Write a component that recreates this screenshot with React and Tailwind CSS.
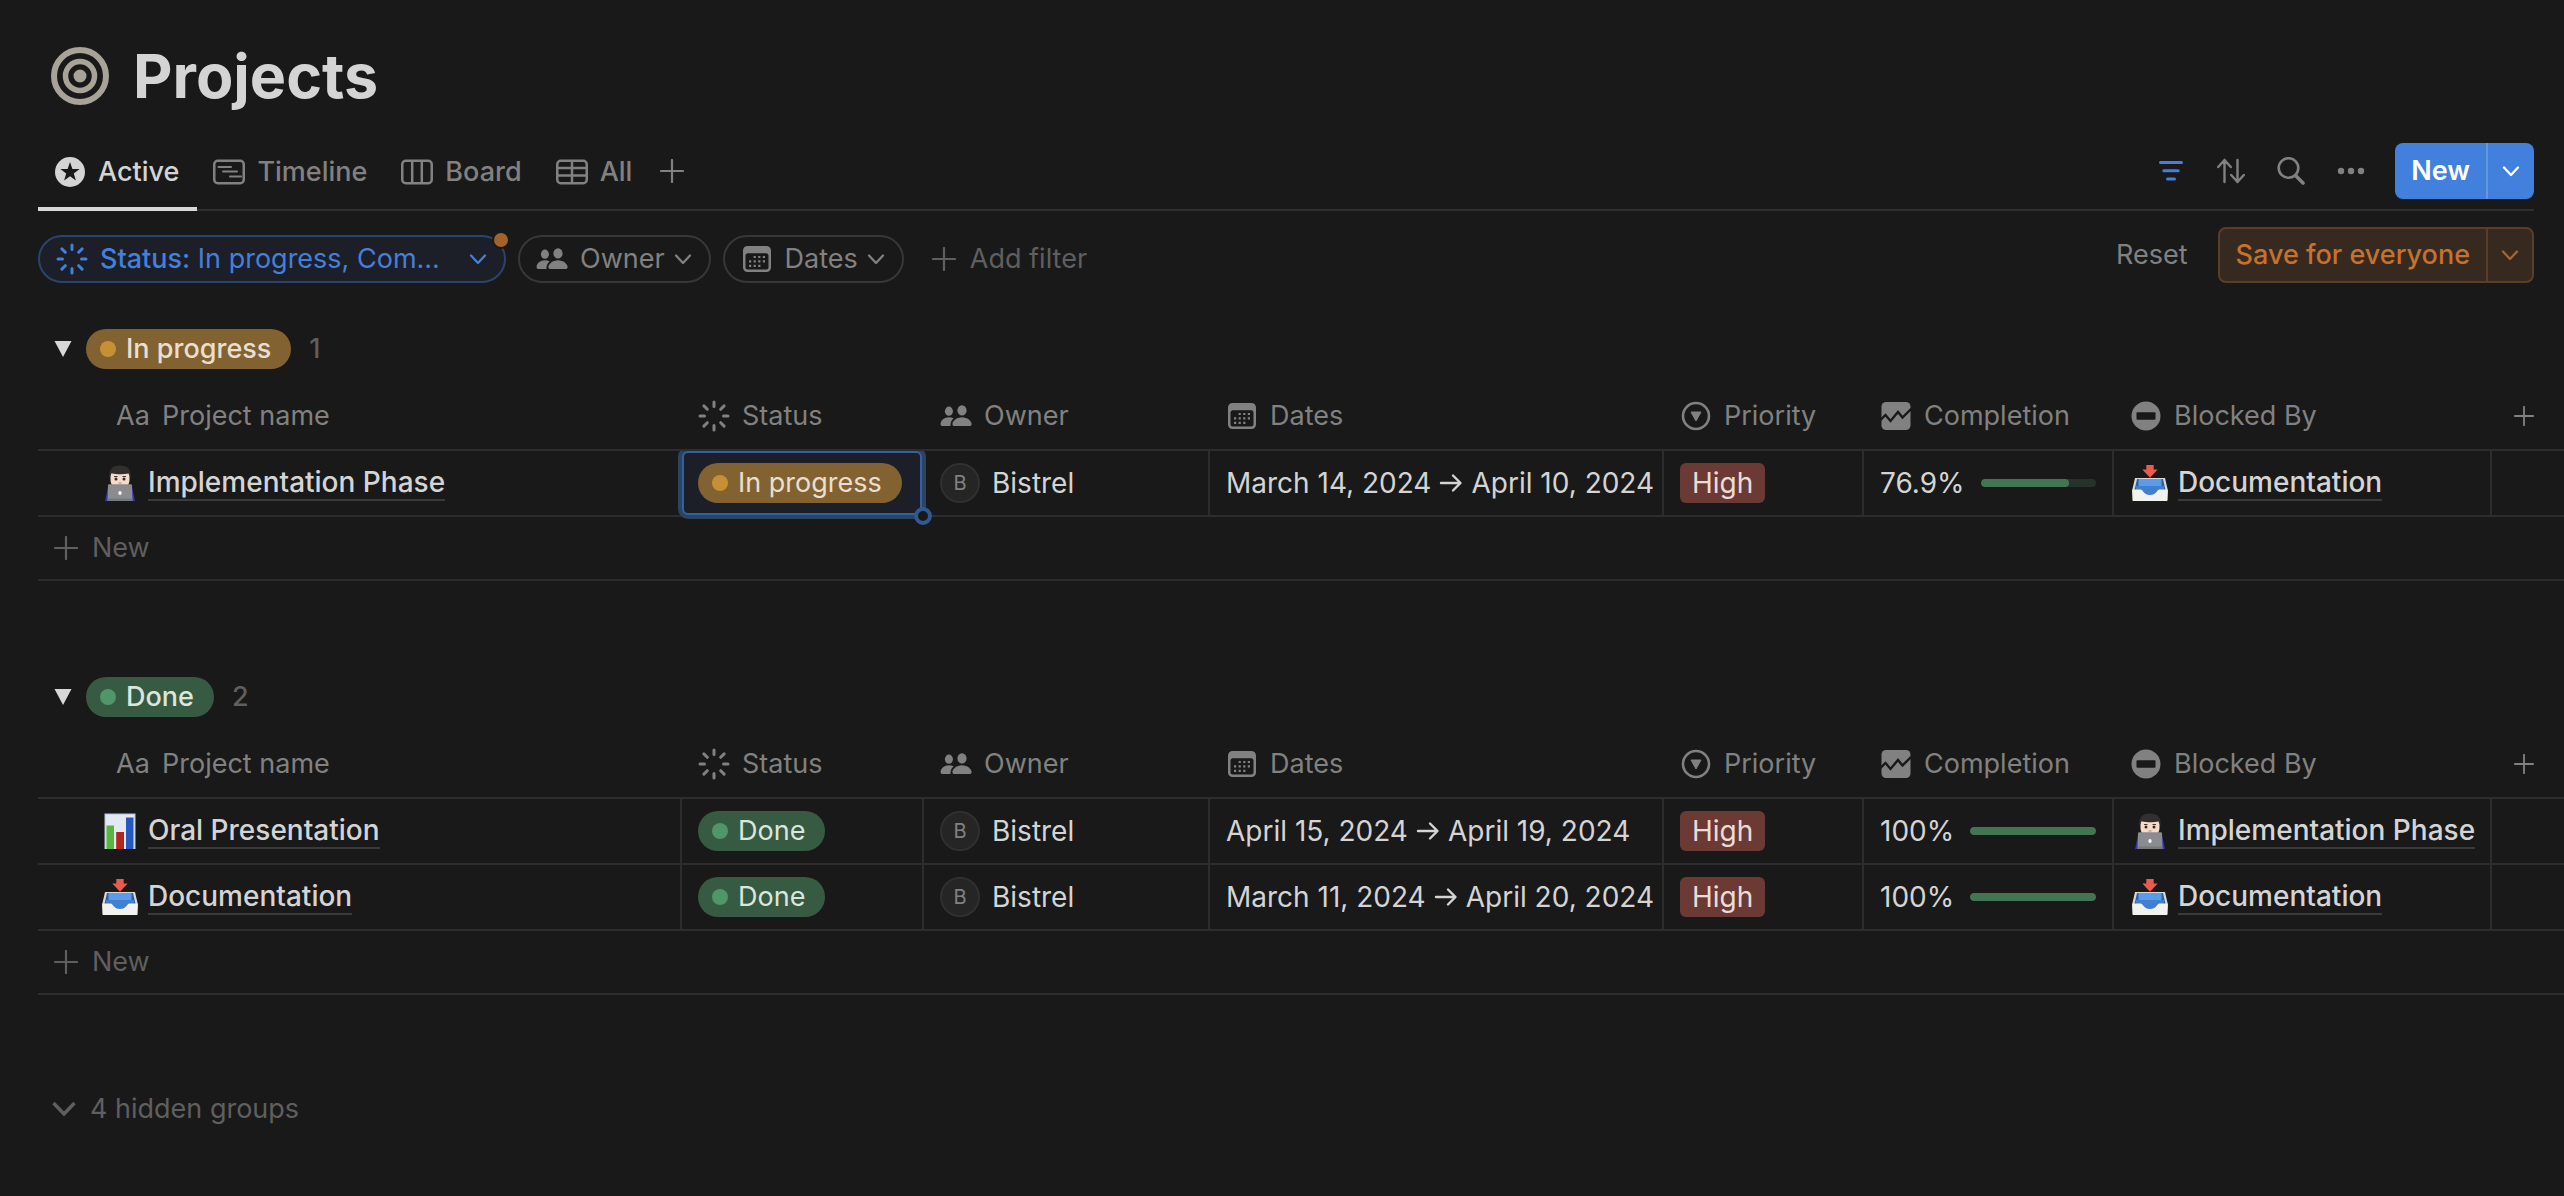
import React from "react";

/* ---------- icons ---------- */

function TargetIcon() {
  return (
    <svg viewBox="0 0 58 58" className="size-[58px] shrink-0 text-[#a7a398]" fill="none" aria-hidden="true">
      <circle cx="29" cy="29" r="26" stroke="currentColor" strokeWidth="6" />
      <circle cx="29" cy="29" r="14.5" stroke="currentColor" strokeWidth="5.5" />
      <circle cx="29" cy="29" r="6.5" fill="currentColor" />
    </svg>
  );
}

function StarCircleIcon() {
  return (
    <svg viewBox="0 0 32 32" className="size-8 shrink-0" aria-hidden="true">
      <circle cx="16" cy="16" r="15" fill="currentColor" />
      <path fill="#191919" d="M16 6l2.4 6.9 7.2.1-5.8 4.4 2.1 7.1L16 20.3l-5.9 4.2 2.1-7.1L6.4 13l7.2-.1z" />
    </svg>
  );
}

function TimelineIcon() {
  return (
    <svg viewBox="0 0 32 32" className="size-8 shrink-0" fill="none" stroke="currentColor" strokeLinecap="round" aria-hidden="true">
      <rect x="1.25" y="4.75" width="29.5" height="22.5" rx="3.5" strokeWidth="2.5" />
      <path d="M5.5 11H18M10 15.5h14M17 20.5h11" strokeWidth="2" />
    </svg>
  );
}

function BoardIcon() {
  return (
    <svg viewBox="0 0 32 32" className="size-8 shrink-0" fill="none" stroke="currentColor" strokeWidth="2.5" aria-hidden="true">
      <rect x="1.25" y="4.75" width="29.5" height="22.5" rx="3.5" />
      <path d="M11.2 5v22M20.8 5v22" />
    </svg>
  );
}

function TableIcon() {
  return (
    <svg viewBox="0 0 32 32" className="size-8 shrink-0" fill="none" stroke="currentColor" strokeWidth="2.5" aria-hidden="true">
      <rect x="1.25" y="4.75" width="29.5" height="22.5" rx="3.5" />
      <path d="M1 12h30M1 19.5h30M16 5v22" />
    </svg>
  );
}

function PlusIcon({ className }) {
  return (
    <svg viewBox="0 0 24 24" className={className} fill="none" stroke="currentColor" strokeWidth="2.2" strokeLinecap="round" aria-hidden="true">
      <path d="M12 1v22M1 12h22" />
    </svg>
  );
}

function ChevronIcon({ className }) {
  return (
    <svg viewBox="0 0 20 20" className={className} fill="none" stroke="currentColor" strokeWidth="2.3" strokeLinecap="round" strokeLinejoin="round" aria-hidden="true">
      <path d="M3 6.5l7 7.5 7-7.5" />
    </svg>
  );
}

function StatusIcon() {
  return (
    <svg viewBox="0 0 32 32" className="size-8 shrink-0" fill="none" stroke="currentColor" strokeWidth="3" strokeLinecap="round" aria-hidden="true">
      <path d="M16 2v4.5M16 25.5V30M2 16h4.500M25.500 16H30M5.900 5.900l3.400 3.400M22.700 22.700l3.400 3.400M5.900 26.100l3.400-3.400M22.700 9.300l3.400-3.400" />
    </svg>
  );
}

function PeopleIcon() {
  return (
    <svg viewBox="0 0 32 32" className="size-8 shrink-0" fill="currentColor" aria-hidden="true">
      <ellipse cx="8.9" cy="11.2" rx="4" ry="4.6" />
      <ellipse cx="22" cy="10.4" rx="4.6" ry="5.2" />
      <path d="M13.6 18.2C12.3 17.6 10.7 17.2 9 17.2c-4.700 0-8.400 3.300-8.400 6.800 0 1.400.8 2 1.900 2h8c-.3-2.800.8-5.800 3.100-7.800z" />
      <path d="M22 17.2c-5.400 0-9.600 3.800-9.600 7 0 1.200.8 1.800 2.200 1.800h14.800c1.400 0 2.200-.6 2.200-1.800 0-3.200-4.200-7-9.600-7z" />
    </svg>
  );
}

function CalendarIcon() {
  return (
    <svg viewBox="0 0 32 32" className="size-8 shrink-0" aria-hidden="true">
      <path fill="currentColor" fillRule="evenodd" d="M6.5 3h19A4.500 4.500 0 0 1 30 7.500v17a4.500 4.500 0 0 1-4.500 4.500h-19A4.500 4.500 0 0 1 2 24.500v-17A4.500 4.500 0 0 1 6.500 3zm-2 9.500v11.700c0 1.300 1 2.300 2.300 2.300h18.400c1.300 0 2.300-1 2.300-2.300V12.500c0-1.300-1-2.300-2.300-2.300H6.800c-1.300 0-2.300 1-2.300 2.300z" />
      <path stroke="currentColor" strokeWidth="2.2" strokeDasharray="2.2 2.4" d="M12.6 14h12M8 18.400h16.200M8 22.800h11.600" />
    </svg>
  );
}

function PriorityIcon() {
  return (
    <svg viewBox="0 0 32 32" className="size-8 shrink-0" aria-hidden="true">
      <circle cx="16" cy="16" r="13" fill="none" stroke="currentColor" strokeWidth="2.6" />
      <path fill="currentColor" stroke="currentColor" strokeLinejoin="round" d="M11 12h10l-5 9z" />
    </svg>
  );
}

function CompletionIcon() {
  return (
    <svg viewBox="0 0 32 32" className="size-8 shrink-0" aria-hidden="true">
      <rect x="1.5" y="2" width="29" height="28" rx="4.5" fill="currentColor" />
      <path fill="none" stroke="#191919" strokeWidth="2.4" strokeLinejoin="miter" d="M0 20.500l5.500-5.500 5 6 7.500-9 4.500 5.500L31.500 8.500" />
    </svg>
  );
}

function BlockedIcon() {
  return (
    <svg viewBox="0 0 32 32" className="size-8 shrink-0" aria-hidden="true">
      <circle cx="16" cy="16" r="14.5" fill="currentColor" />
      <rect x="6.5" y="12.3" width="19" height="7.4" rx="1" fill="#191919" />
    </svg>
  );
}

function FilterIcon() {
  return (
    <svg viewBox="0 0 28 28" className="size-7" fill="none" stroke="currentColor" strokeWidth="3" strokeLinecap="round" aria-hidden="true">
      <path d="M3.5 5.500h21M6.800 13.800h14.400M10.500 22h7" />
    </svg>
  );
}

function SortIcon() {
  return (
    <svg viewBox="0 0 28 28" className="size-7" fill="none" stroke="currentColor" strokeWidth="2.4" strokeLinecap="round" strokeLinejoin="round" aria-hidden="true">
      <path d="M7.500 25V3M1.200 10l6.300-7 6.300 7M20.500 3v22M14.200 18l6.300 7 6.300-7" />
    </svg>
  );
}

function SearchIcon() {
  return (
    <svg viewBox="0 0 28 28" className="size-7" fill="none" stroke="currentColor" strokeLinecap="round" aria-hidden="true">
      <circle cx="11.5" cy="11" r="9.8" strokeWidth="2.6" />
      <path d="M19 19l7 7" strokeWidth="3.6" />
    </svg>
  );
}

function DotsIcon() {
  return (
    <svg viewBox="0 0 28 28" className="size-7" fill="currentColor" aria-hidden="true">
      <circle cx="4" cy="14" r="3.2" />
      <circle cx="14" cy="14" r="3.2" />
      <circle cx="24" cy="14" r="3.2" />
    </svg>
  );
}

/* ---------- page emoji ---------- */

function PersonEmoji() {
  return (
    <svg viewBox="0 0 36 36" className="size-9 shrink-0" aria-hidden="true">
      <path fill="#3334b8" d="M3 36l3-14h24l3 14z" />
      <path fill="#f4dcc8" d="M8.5 10c0-5 4-8 9.500-8s9.500 3 9.500 8v5c0 5-4 9-9.500 9s-9.500-4-9.500-9z" />
      <path fill="#332f2f" d="M7.5 13C6.500 5 10 .5 18 .5S29.500 5 28.500 13l-2-4.500c-5 1.200-12 1-17-.3z" />
      <circle cx="14" cy="14" r="1.5" fill="#3b2a20" />
      <circle cx="22" cy="14" r="1.5" fill="#3b2a20" />
      <path d="M12 11.500h3.500M20.500 11.500H24" stroke="#4b3a30" />
      <path d="M16.500 18h3" stroke="#b5806a" />
      <path fill="#8b8c90" d="M6 20.500c0-.8.6-1.300 1.400-1.300h21.200c.8 0 1.400.5 1.400 1.300L30.500 36h-25z" />
      <path fill="#77787c" d="M5.600 33.500h24.800l.1 2.500h-25z" />
      <ellipse cx="18" cy="28" rx="1.7" ry="2" fill="#f5f5f7" />
    </svg>
  );
}

function InboxEmoji() {
  return (
    <svg viewBox="0 0 36 36" className="size-9 shrink-0" aria-hidden="true">
      <path fill="#d9d8d4" d="M3 13h30l3 13-1 10H1L0 26z" />
      <path fill="#2f5f9e" d="M5 14h26l2.500 11H2.500z" />
      <path fill="#5b9bec" d="M6.500 14h23v7h-23z" />
      <path fill="#4280cf" d="M4 21h28v4l-8 5H12l-8-5z" />
      <path fill="#f3f2ee" d="M.5 24.500h8c2.500 0 3 5.500 9.500 5.500s7-5.500 9.500-5.500h8V35c0 .6-.4 1-1 1h-33c-.6 0-1-.4-1-1z" />
      <path fill="#ea5b4b" d="M14.300 0h7.400v4.500h4L18 12.700l-7.700-8.200h4z" />
    </svg>
  );
}

function ChartEmoji() {
  return (
    <svg viewBox="0 0 36 36" className="size-9 shrink-0" aria-hidden="true">
      <rect x="2.5" y=".5" width="31" height="35.5" fill="#b9c6d6" />
      <rect x="3.5" y="1.5" width="29" height="34.5" fill="#e2e9f2" />
      <rect x="4.5" y="12.5" width="7.5" height="23.5" fill="#55b83c" />
      <rect x="14.2" y="19" width="7.8" height="17" fill="#b3261e" />
      <rect x="24" y="4.5" width="7.5" height="31.5" fill="#2758bd" />
    </svg>
  );
}

/* ---------- data ---------- */

const PAGES = {
  implementation: { title: "Implementation Phase", Emoji: PersonEmoji },
  documentation: { title: "Documentation", Emoji: InboxEmoji },
  oral: { title: "Oral Presentation", Emoji: ChartEmoji },
};

const GROUPS = [
  {
    status: "In progress",
    rows: [
      { page: "implementation", start: "March 14, 2024", end: "April 10, 2024", completion: 76.9, blockedBy: "documentation", selected: true },
    ],
  },
  {
    status: "Done",
    rows: [
      { page: "oral", start: "April 15, 2024", end: "April 19, 2024", completion: 100, blockedBy: "implementation" },
      { page: "documentation", start: "March 11, 2024", end: "April 20, 2024", completion: 100, blockedBy: "documentation" },
    ],
  },
];

const COLUMNS = [
  { label: "Status", Icon: StatusIcon },
  { label: "Owner", Icon: PeopleIcon },
  { label: "Dates", Icon: CalendarIcon },
  { label: "Priority", Icon: PriorityIcon },
  { label: "Completion", Icon: CompletionIcon },
  { label: "Blocked By", Icon: BlockedIcon },
];

const VIEWS = [
  { label: "Active", Icon: StarCircleIcon, active: true },
  { label: "Timeline", Icon: TimelineIcon },
  { label: "Board", Icon: BoardIcon },
  { label: "All", Icon: TableIcon },
];

/* ---------- pieces ---------- */

function StatusPill({ status, strong }) {
  const done = status === "Done";
  return (
    <span
      className={`inline-flex h-10 items-center gap-2.5 rounded-full pl-[14px] pr-5 text-[27px] ${strong ? "font-medium" : ""} ${
        done ? "bg-[#375a43] text-[#dbe6de]" : "bg-[#836232] text-[#e9dfd0]"
      }`}
    >
      <span className={`size-4 rounded-full ${done ? "bg-[#4f9768]" : "bg-[#c79035]"}`} />
      {status}
    </span>
  );
}

function PageLink({ page }) {
  const { title, Emoji } = PAGES[page];
  return (
    <a href="#" className="flex items-center gap-2.5 whitespace-nowrap font-medium">
      <Emoji />
      <span className="border-b-2 border-[#3a3a3a] leading-[34px]">{title}</span>
    </a>
  );
}

function ProjectRow({ row, status }) {
  const cell = "h-[66px] border-b-2 border-r-2 border-[#2d2d2d]";
  return (
    <tr>
      <td className={`${cell} pl-16`}>
        <PageLink page={row.page} />
      </td>
      <td className={`relative ${cell} px-4`}>
        {row.selected && (
          <>
            <span className="absolute inset-0 rounded-md border-2 border-[#33609f] bg-[#1c1f28] shadow-[0_0_0_4px_#2a4564] [clip-path:inset(0_-6px_-6px_-6px)]" />
            <span className="absolute -bottom-2.5 -right-2.5 z-10 size-[18px] rounded-full border-4 border-[#305891] bg-[#191919]" />
          </>
        )}
        <span className="relative flex">
          <StatusPill status={status} />
        </span>
      </td>
      <td className={`${cell} px-4`}>
        <span className="flex items-center gap-3">
          <span className="flex size-10 items-center justify-center rounded-full border-2 border-[#303030] bg-[#252525] text-xl text-[#818181]">B</span>
          Bistrel
        </span>
      </td>
      <td className={`${cell} whitespace-nowrap pl-4`}>
        <span className="flex items-center gap-2">
          {row.start}
          <svg viewBox="0 0 24 24" className="size-6 shrink-0" fill="none" stroke="currentColor" strokeWidth="2.4" strokeLinecap="round" strokeLinejoin="round" role="img" aria-label="to">
            <path d="M2 12h19M14 4.500l7.500 7.500-7.500 7.500" />
          </svg>
          {row.end}
        </span>
      </td>
      <td className={`${cell} px-4`}>
        <span className="inline-flex h-10 items-center rounded-md bg-[#6b3a34] px-3 align-middle text-[#ecdcd9]">High</span>
      </td>
      <td className={`${cell} px-4`}>
        <span className="flex items-center gap-4">
          {row.completion}%
          <span className="h-2 flex-1 overflow-hidden rounded-full bg-[#26332b]">
            <span className="block h-full rounded-full bg-[#437552]" style={{ width: `${row.completion}%` }} />
          </span>
        </span>
      </td>
      <td className={`${cell} pl-[18px]`}>
        <PageLink page={row.blockedBy} />
      </td>
      <td className="border-b-2 border-[#2d2d2d]" />
    </tr>
  );
}

function Group({ status, rows }) {
  return (
    <section className="pl-[38px]">
      <div className="flex h-10 items-center">
        <button type="button" aria-label={`Toggle ${status}`} className="flex w-12 items-center pl-4 text-[#d8d8d8]">
          <svg viewBox="0 0 18 16" className="h-4 w-[18px]" fill="currentColor" aria-hidden="true">
            <path d="M.5 0h17L9 16z" />
          </svg>
        </button>
        <StatusPill status={status} strong />
        <span className="ml-[18px] font-medium text-[#5f5f5f]">{rows.length}</span>
      </div>
      <table className="mt-[14px] w-full table-fixed border-separate border-spacing-0 text-left">
        <colgroup>
          <col className="w-[644px]" />
          <col className="w-[242px]" />
          <col className="w-[286px]" />
          <col className="w-[454px]" />
          <col className="w-[200px]" />
          <col className="w-[250px]" />
          <col className="w-[378px]" />
          <col />
        </colgroup>
        <thead className="text-[#818181]">
          <tr>
            <th scope="col" className="h-[68px] border-b-2 border-[#2d2d2d] pl-[78px] font-normal">
              <span className="flex items-center gap-[14px]">
                <span aria-hidden="true" className="w-8">Aa</span>
                Project name
              </span>
            </th>
            {COLUMNS.map(({ label, Icon }) => (
              <th key={label} scope="col" className="border-b-2 border-[#2d2d2d] px-4 font-normal">
                <span className="flex items-center gap-3 whitespace-nowrap">
                  <Icon />
                  {label}
                </span>
              </th>
            ))}
            <th scope="col" className="border-b-2 border-[#2d2d2d]">
              <button type="button" aria-label="Add property" className="flex w-full justify-center pr-2">
                <PlusIcon className="size-5" />
              </button>
            </th>
          </tr>
        </thead>
        <tbody className="text-[28px]">
          {rows.map((row) => (
            <ProjectRow key={row.page} row={row} status={status} />
          ))}
        </tbody>
      </table>
      <button type="button" className="flex h-16 w-full items-center gap-[14px] border-b-2 border-[#2d2d2d] pl-4 text-[#5f5f5f]">
        <PlusIcon className="size-6" />
        New
      </button>
    </section>
  );
}

function FilterChip({ label, Icon }) {
  return (
    <button type="button" className="flex h-12 items-center gap-3 rounded-full border-2 border-[#373737] px-4 text-[#818181]">
      <Icon />
      <span className="flex items-center gap-2">
        {label}
        <ChevronIcon className="size-5" />
      </span>
    </button>
  );
}

export default function App() {
  return (
    <main className="min-h-screen overflow-x-hidden bg-[#191919] pb-16 font-['Inter',sans-serif] text-[27px] leading-9 text-[#d4d4d4]">
      <header className="flex h-[133px] items-start pl-[51px] pt-9">
        <div className="flex h-20 items-center gap-6">
          <TargetIcon />
          <h1 className="text-[61px] font-bold leading-[80px]">Projects</h1>
        </div>
      </header>

      <nav className="ml-[38px] mr-[30px] flex h-[78px] items-stretch border-b-2 border-[#2f2f2f] font-medium text-[#818181]">
        {VIEWS.map(({ label, Icon, active }) => (
          <button
            key={label}
            type="button"
            className={`-mb-[2px] flex items-center gap-3 border-y-4 border-transparent pl-4 pr-[18px] ${
              active ? "border-b-[#d8d8d8] text-[#d4d4d4]" : ""
            }`}
          >
            <Icon />
            {label}
          </button>
        ))}
        <button type="button" aria-label="Add view" className="px-2.5">
          <PlusIcon className="size-6" />
        </button>
        <div className="ml-auto flex items-center gap-[30px]">
          <div className="flex items-center gap-8">
            <button type="button" aria-label="Filter" className="text-[#447fdb]">
              <FilterIcon />
            </button>
            <button type="button" aria-label="Sort">
              <SortIcon />
            </button>
            <button type="button" aria-label="Search">
              <SearchIcon />
            </button>
            <button type="button" aria-label="More">
              <DotsIcon />
            </button>
          </div>
          <div className="flex h-14 rounded-lg bg-[#4180dc] font-semibold text-white">
            <button type="button" className="px-4">New</button>
            <button type="button" aria-label="New options" className="flex w-12 items-center justify-center border-l-2 border-[#6496e1]">
              <ChevronIcon className="size-5" />
            </button>
          </div>
        </div>
      </nav>

      <div className="ml-[38px] mr-[30px] flex items-end gap-3 pt-4">
        <button
          type="button"
          className="relative flex h-12 w-[468px] items-center gap-3 rounded-full border-2 border-[#2a4470] bg-[#1c1f28] px-4 text-[#447fdb]"
        >
          <StatusIcon />
          <span className="whitespace-nowrap">
            <span className="font-medium">Status:</span> In progress, Com...
          </span>
          <ChevronIcon className="ml-auto size-5" />
          <span className="absolute -right-[6px] -top-[6px] size-[18px] rounded-full border-2 border-[#191919] bg-[#a3622b]" />
        </button>
        <FilterChip label="Owner" Icon={PeopleIcon} />
        <FilterChip label="Dates" Icon={CalendarIcon} />
        <button type="button" className="flex h-12 items-center gap-[14px] px-4 text-[#5f5f5f]">
          <PlusIcon className="size-6" />
          Add filter
        </button>
        <div className="ml-auto flex h-14 items-center gap-[30px]">
          <button type="button" className="text-[#818181]">Reset</button>
          <div className="flex h-14 rounded-lg border-2 border-[#5c3e27] bg-[#36291f] text-[#c4722d]">
            <button type="button" className="px-4 font-medium">Save for everyone</button>
            <button type="button" aria-label="Save options" className="flex w-[46px] items-center justify-center border-l-2 border-[#5c3e27] text-[#a8642c]">
              <ChevronIcon className="size-5" />
            </button>
          </div>
        </div>
      </div>

      <div className="mt-[46px] flex flex-col gap-24">
        {GROUPS.map((group) => (
          <Group key={group.status} {...group} />
        ))}
      </div>

      <button type="button" className="ml-[52px] mt-24 flex items-center gap-[14px] text-[#5f5f5f]">
        <svg viewBox="0 0 24 16" className="h-4 w-6" fill="none" stroke="currentColor" strokeWidth="3.4" aria-hidden="true">
          <path d="M1.500 2L12 13 22.500 2" />
        </svg>
        4 hidden groups
      </button>
    </main>
  );
}
